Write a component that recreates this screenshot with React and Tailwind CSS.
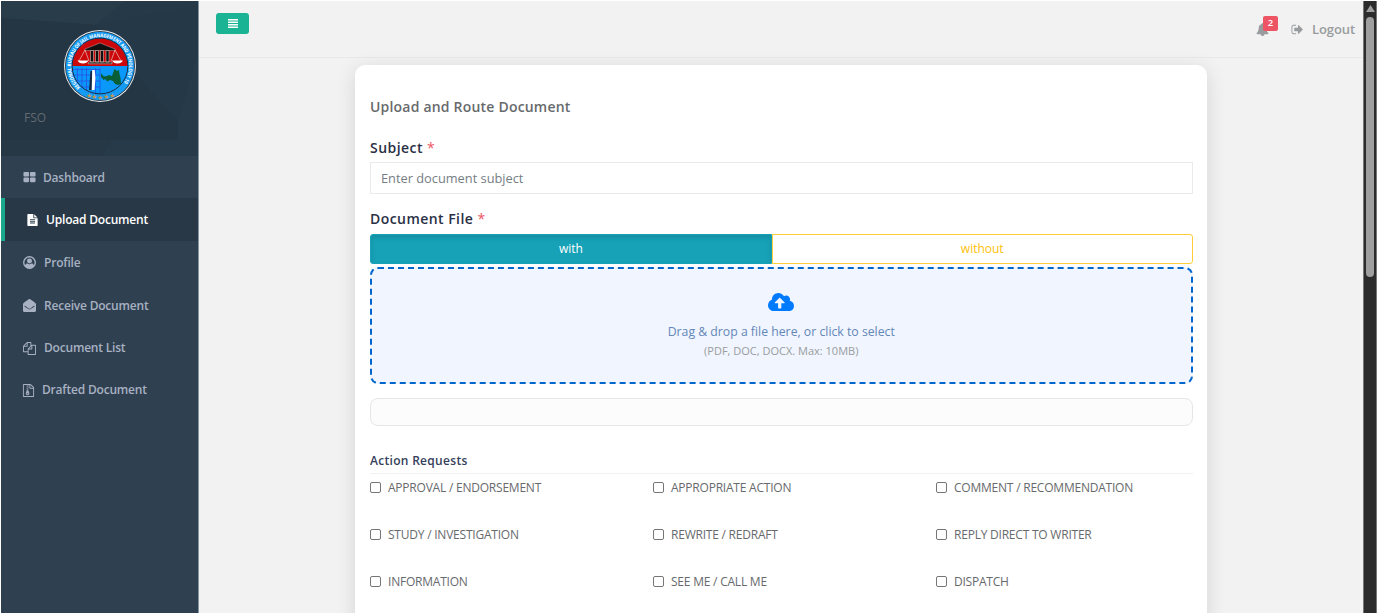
import React from "react";
import { FaCloudUploadAlt, FaEnvelopeOpen } from "react-icons/fa";

const paths = {
  grid: "M832 1024v384q0 52-38 90t-90 38h-512q-52 0-90-38t-38-90v-384q0-52 38-90t90-38h512q52 0 90 38t38 90zm0-768v384q0 52-38 90t-90 38h-512q-52 0-90-38t-38-90v-384q0-52 38-90t90-38h512q52 0 90 38t38 90zm896 768v384q0 52-38 90t-90 38h-512q-52 0-90-38t-38-90v-384q0-52 38-90t90-38h512q52 0 90 38t38 90zm0-768v384q0 52-38 90t-90 38h-512q-52 0-90-38t-38-90v-384q0-52 38-90t90-38h512q52 0 90 38t38 90z",
  file: "M1596 476q14 14 28 36h-472v-472q22 14 36 28zm-476 164h544v1056q0 40-28 68t-68 28h-1344q-40 0-68-28t-28-68v-1600q0-40 28-68t68-28h800v544q0 40 28 68t68 28zm160 736v-64q0-14-9-23t-23-9h-704q-14 0-23 9t-9 23v64q0 14 9 23t23 9h704q14 0 23-9t9-23zm0-256v-64q0-14-9-23t-23-9h-704q-14 0-23 9t-9 23v64q0 14 9 23t23 9h704q14 0 23-9t9-23zm0-256v-64q0-14-9-23t-23-9h-704q-14 0-23 9t-9 23v64q0 14 9 23t23 9h704q14 0 23-9t9-23z",
  files: "M1696 384q40 0 68 28t28 68v1216q0 40-28 68t-68 28h-960q-40 0-68-28t-28-68v-288h-544q-40 0-68-28t-28-68v-672q0-40 20-88t48-76l408-408q28-28 76-48t88-20h416q40 0 68 28t28 68v328q68-40 128-40h416zm-544 213l-299 299h299v-299zm-640-384l-299 299h299v-299zm196 647l316-316v-416h-384v416q0 40-28 68t-68 28h-416v640h512v-256q0-40 20-88t48-76zm956 804v-1152h-384v416q0 40-28 68t-68 28h-416v640h896z",
  archive: "M768 384v-128h-128v128h128zm128 128v-128h-128v128h128zm-128 128v-128h-128v128h128zm128 128v-128h-128v128h128zm700-388q28 28 48 76t20 88v1152q0 40-28 68t-68 28h-1344q-40 0-68-28t-28-68v-1600q0-40 28-68t68-28h896q40 0 88 20t76 48zm-444-244v376h376q-10-29-22-41l-313-313q-12-12-41-22zm384 1528v-1024h-416q-40 0-68-28t-28-68v-416h-128v128h-128v-128h-512v1536h1280zm-627-721l107 349q8 27 8 52 0 83-72.5 137.5t-183.5 54.5-183.5-54.5-72.5-137.5q0-25 8-52 21-63 120-396v-128h128v128h79q22 0 39 13t23 34zm-141 465q53 0 90.5-19t37.5-45-37.5-45-90.5-19-90.5 19-37.5 45 37.5 45 90.5 19z",
  bell: "M912 1696q0-16-16-16-59 0-101.5-42.5t-42.5-101.5q0-16-16-16t-16 16q0 73 51.5 124.5t124.5 51.5q16 0 16-16zm816-288q0 52-38 90t-90 38h-448q0 106-75 181t-181 75-181-75-75-181h-448q-52 0-90-38t-38-90q50-42 91-88t85-119.5 74.5-158.5 50-206 19.5-260q0-152 117-282.5t307-158.5q-8-19-8-39 0-40 28-68t68-28 68 28 28 68q0 20-8 39 190 28 307 158.5t117 282.5q0 139 19.5 260t50 206 74.5 158.5 85 119.5 91 88z",
  signOut: "M704 1440q0 4 1 20t.5 26.5-3 23.5-10 19.5-20.5 6.5h-320q-119 0-203.5-84.5t-84.5-203.5v-704q0-119 84.5-203.5t203.5-84.5h320q13 0 22.5 9.5t9.5 22.5q0 4 1 20t.5 26.5-3 23.5-10 19.5-20.5 6.5h-320q-66 0-113 47t-47 113v704q0 66 47 113t113 47h312l11.5 1 11.5 3 8 5.5 7 9 2 13.5zm928-544q0 26-19 45l-544 544q-19 19-45 19t-45-19-19-45v-288h-448q-26 0-45-19t-19-45v-384q0-26 19-45t45-19h448v-288q0-26 19-45t45-19 45 19l544 544q19 19 19 45z",
};

function Glyph({ name, className }) {
  return (
    <svg viewBox="0 0 1792 1792" fill="currentColor" className={className}>
      <path d={paths[name]} />
    </svg>
  );
}

function UserCircle({ className }) {
  return (
    <svg viewBox="0 0 24 24" className={className}>
      <circle cx="12" cy="12" r="10.700" fill="none" stroke="currentColor" strokeWidth="2.600" />
      <circle cx="12" cy="9.3" r="4.6" fill="currentColor" />
      <path d="M3.500 17.800c1-3 2.700-4 4.800-4 2.200 1.600 5.200 1.600 7.400 0 2.100 0 3.800 1 4.800 4C18.500 21.500 15 23 12 23s-6.500-1.500-8.500-5.200z" fill="currentColor" />
    </svg>
  );
}

function Seal() {
  return (
    <svg viewBox="0 0 72 72" className="size-[72px]">
      <defs>
        <path id="rim" d="M16.300 57.400A29 29 0 1 1 55.700 57.400" />
        <clipPath id="core"><circle cx="36" cy="36" r="27.500" /></clipPath>
      </defs>
      <circle cx="36" cy="36" r="36" fill="#e8eef2" />
      <circle cx="36" cy="36" r="35" fill="#26343d" />
      <circle cx="36" cy="36" r="34.200" fill="#169bf5" />
      <g clipPath="url(#core)">
        <path d="M8 8h56v28H8z" fill="#cb0709" />
        <path d="M8 36h56v28H8z" fill="#0a99fb" />
        <path d="M8 39.500h28M8 45h28M8 51h28M8 57h28M13.500 38v26M18 38v26M22.500 38v26M31.500 38v26M36 38v26" stroke="#2458e8" strokeWidth=".9" />
        <path d="M37 43.500l3 3 3-.5 2-1 3 1 1-3 1.500-4 2.500 2 2-1 .5 4 1 4 .5 6-3 1-3-1-2-3-3-1-3 1.500-1.500-2.500-2 1-2.500-3z" fill="#075e37" />
      </g>
      <circle cx="36" cy="36" r="27.900" fill="none" stroke="#171f2d" strokeWidth=".9" />
      <path d="M21 19l15-6 15 6v1.500H21z" fill="#111" stroke="#d9cdc8" strokeWidth=".4" />
      <path d="M25 32h23v1.800H24zM26.500 20.500h3V32h-3zM31.500 20.500h3V32h-3zM36.500 20.500h3V32h-3zM42 20.500h3V32h-3z" fill="#111" stroke="#e7ddd5" strokeWidth=".5" />
      <path d="M21 20l-6 11M21 20l4 11M51 20l-4 11M51 20l6 11" stroke="#f5e1e1" strokeWidth=".6" />
      <path d="M13.500 30.500h11q-1.500 3-5.500 3t-5.500-3zM48 30.500h11q-1.500 3-5.500 3t-5.500-3z" fill="#fff" />
      <path d="M26.500 41h2l-.5 19h-3z" fill="#142642" />
      <path d="M28.200 40h2.500l.8 8-1 12h-2.800z" fill="#fff" />
      <text className="fill-white font-sans text-[5px] font-bold">
        <textPath href="#rim" textLength="132" lengthAdjust="spacingAndGlyphs">REGIONAL BUREAU OF JAIL MANAGEMENT AND PENOLOGY 10</textPath>
      </text>
      <g className="fill-[#c0954d] text-[6.500px]" textAnchor="middle">
        <text x="24.500" y="67.500">★</text><text x="30" y="69.300">★</text><text x="36" y="70">★</text><text x="42" y="69.300">★</text><text x="47.500" y="67.500">★</text>
      </g>
    </svg>
  );
}

function NavItem({ icon, children, height = "h-[42.500px]", gap = "pl-[22px] gap-[8px]" }) {
  return (
    <a className={`flex items-center text-[12px] font-semibold tracking-[-0.200px] text-[#a7b1c2] ${height} ${gap}`}>
      {icon}
      <span>{children}</span>
    </a>
  );
}

const actions = [
  "APPROVAL / ENDORSEMENT", "APPROPRIATE ACTION", "COMMENT / RECOMMENDATION",
  "STUDY / INVESTIGATION", "REWRITE / REDRAFT", "REPLY DIRECT TO WRITER",
  "INFORMATION", "SEE ME / CALL ME", "DISPATCH",
];

export default function App() {
  return (
    <div className="flex h-[613px] w-[1378px] overflow-hidden border-t border-r border-l border-white bg-[#f2f2f2] font-['Open_Sans',sans-serif] text-[#676a6c]">
      <aside className="flex w-[198px] shrink-0 flex-col border-r border-[#8295a3] bg-[#2f4050]">
        <header className="relative h-[155px] bg-[#263949]">
          <svg viewBox="0 0 197 155" className="absolute inset-0 h-full w-full">
            <path d="M0 0h124L94 24 0 17z" fill="#293c4a" />
            <path d="M94 24L197 5v46l-20 69-39-43z" fill="#243847" />
            <path d="M177 120l20-69v104h-97l10-16z" fill="#273a49" />
            <path d="M0 17l94 7 44 53 39 43v19H0z" fill="#243544" />
            <path d="M0 139h110l-10 16H0z" fill="#263846" />
          </svg>
          <div className="relative flex flex-col">
            <div className="flex justify-center pt-[29px]"><Seal /></div>
            <span className="mt-[6px] pl-[23px] text-[12px] leading-[20px] text-[#626b70]">FSO</span>
          </div>
        </header>
        <nav className="flex flex-col">
          <NavItem height="h-[42px] pt-[1px]" gap="pl-[22px] gap-[7px]" icon={<Glyph name="grid" className="size-[13px]" />}>Dashboard</NavItem>
          <a className="flex h-[43px] items-center gap-[7px] border-l-4 border-[#19aa8d] bg-[#293846] pt-[1px] pl-[21px] text-[12px] font-semibold tracking-[-0.200px] text-white">
            <Glyph name="file" className="size-[12px] w-[13px]" />
            <span>Upload Document</span>
          </a>
          <NavItem height="mt-[0.500px] h-[42.500px]" icon={<UserCircle className="size-[13px]" />}>Profile</NavItem>
          <NavItem height="h-[43px]" icon={<FaEnvelopeOpen className="size-[13px]" />}>Receive Document</NavItem>
          <NavItem height="h-[42px]" icon={<Glyph name="files" className="size-[13px]" />}>Document List</NavItem>
          <NavItem gap="pl-[21px] gap-[7px]" icon={<Glyph name="archive" className="size-[13px]" />}>Drafted Document</NavItem>
        </nav>
      </aside>

      <main className="flex min-w-0 flex-1 flex-col">
        <header className="flex h-[57px] shrink-0 items-start justify-between border-b border-[#e7eaec] pr-[8px] pl-[17px]">
          <button className="mt-[12px] flex h-[21px] w-[33px] items-center justify-center rounded-[3px] bg-[#1ab394]">
            <svg viewBox="0 0 10 9" className="h-[9px] w-[10px]" stroke="white" strokeWidth="1.500"><path d="M0 .8h10M0 3.300h10M0 5.700h10M0 8.200h10" /></svg>
          </button>
          <div className="flex h-full items-center text-[#999c9e]">
            <div className="relative mr-[22px]">
              <Glyph name="bell" className="size-[13px]" />
              <span className="absolute -top-[7px] left-[7px] flex h-[15px] w-[15px] items-center justify-center rounded-[2px] bg-[#ed5565] text-[9.500px] font-semibold text-white">2</span>
            </div>
            <Glyph name="signOut" className="mr-[8px] size-[13px]" />
            <span className="pt-[1px] text-[13px] font-semibold tracking-[-0.100px]">Logout</span>
          </div>
        </header>

        <section className="mt-[7px] ml-[156px] h-[600px] w-[852px] shrink-0 rounded-[10px] bg-white px-[15px] pt-[32px] pr-[14.500px] shadow-[0_4px_20px_rgba(0,0,0,0.120)]">
          <h1 className="text-[14px] leading-[20px] font-semibold tracking-[0.200px]">Upload and Route Document</h1>
          <label className="mt-[21px] block text-[14px] leading-[20px] font-semibold tracking-[0.450px] text-[#2a3045]">Subject <span className="font-normal text-[#ed5565]">*</span></label>
          <input placeholder="Enter document subject" className="mt-[4px] block h-[32px] w-full border border-[#e9eaeb] px-[10px] text-[12.800px] placeholder:text-[#757d84]" />
          <label className="mt-[15px] block text-[14px] leading-[20px] font-semibold tracking-[0.450px] text-[#2a3045]">Document File <span className="font-normal text-[#ed5565]">*</span></label>
          <div className="mt-[5px] flex h-[30px] text-[12px]">
            <button className="w-[402px] rounded-l-[3px] border border-[#17a2b8] bg-[#17a2b8] text-white shadow-[inset_0_3px_5px_rgba(0,0,0,0.125)]">with</button>
            <button className="flex-1 rounded-r-[3px] border border-[#ffc107]/80 text-[#ffc107]">without</button>
          </div>
          <div className="mt-[3px] flex h-[117px] flex-col items-center rounded-[8px] border-2 border-dashed border-[#0066cc] bg-[#f0f5ff] pt-[20px]">
            <FaCloudUploadAlt className="size-[26px] text-[#007bff]" />
            <p className="mt-[7px] text-[12.250px] leading-[20px] text-[#6387b7]">Drag &amp; drop a file here, or click to select</p>
            <p className="text-[11px] leading-[18px] text-[#999c9e]">(PDF, DOC, DOCX. Max: 10MB)</p>
          </div>
          <div className="mt-[14px] h-[28px] rounded-[8px] border border-[#e5e6e7] bg-[#fcfcfc]" />
          <h2 className="mt-[24px] h-[24px] border-b border-[#f0f1f2] text-[12px] leading-[21px] font-semibold tracking-[0.300px] text-[#35405b]">Action Requests</h2>
          <div className="grid grid-cols-[283px_283px_1fr] pt-[4px]">
            {actions.map((name) => (
              <label key={name} className="flex h-[47px] items-start gap-[7px] text-[12px] leading-[20px] tracking-[-0.220px]">
                <input type="checkbox" className="mt-[4px] size-[11px] shrink-0 appearance-none rounded-[2px] border border-[#767676] bg-white" />
                <span>{name}</span>
              </label>
            ))}
          </div>
        </section>
      </main>

      <div className="flex w-[14px] shrink-0 flex-col items-center border-x border-[#777] bg-[#2c2c2c]">
        <svg viewBox="0 0 9 7" className="mt-[4px] h-[7px] w-[9px]"><path d="M4.500 0L9 7H0z" fill="#9f9f9f" /></svg>
        <div className="mt-[5px] h-[260px] w-[8px] rounded-[4px] bg-[#9f9f9f]" />
      </div>
    </div>
  );
}
